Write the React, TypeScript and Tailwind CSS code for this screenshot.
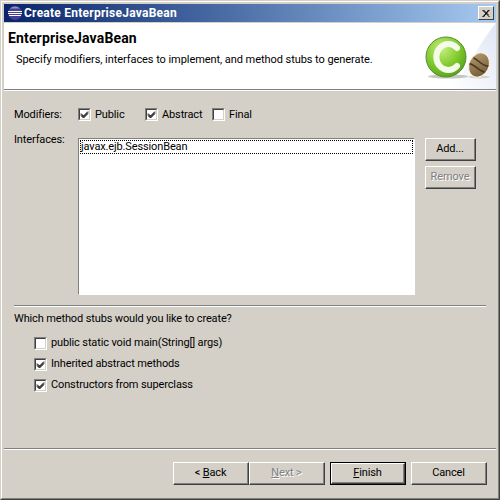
function Check({ on }: { on?: boolean }) {
  return (
    <span className="w-[13px] h-[13px] shrink-0 bg-white border border-t-[#808080] border-l-[#808080] border-r-white border-b-white">
      <span className="block w-[11px] h-[11px] border border-t-[#404040] border-l-[#404040] border-r-[#d4d0c8] border-b-[#d4d0c8]">
        {on && (
          <svg width="9" height="9" viewBox="0 0 9 9" className="block">
            <path d="M1 3.5 L3.5 6 L8 1.5 M1 4.5 L3.5 7 L8 2.5 M1 5.5 L3.5 8 L8 3.5" fill="none" stroke="#000" strokeWidth="1" />
          </svg>
        )}
      </span>
    </span>
  );
}

function Btn({ w, children, def }: { w: string; children: React.ReactNode; def?: boolean }) {
  return (
    <div className={`${w} h-[23px] ${def ? "border border-black" : ""}`}>
      <div className="h-full border border-t-white border-l-white border-r-[#404040] border-b-[#404040]">
        <div className="h-full flex items-center justify-center border-r border-b border-r-[#808080] border-b-[#808080]">
          {children}
        </div>
      </div>
    </div>
  );
}

function Logo() {
  return (
    <svg width="75" height="66" viewBox="0 0 75 66" className="block">
      <defs>
        <radialGradient id="g" cx="0.4" cy="0.3" r="0.8">
          <stop offset="0" stopColor="#c6ee7c" />
          <stop offset="0.55" stopColor="#7fc92c" />
          <stop offset="1" stopColor="#4c9a16" />
        </radialGradient>
        <linearGradient id="bg" x1="0" y1="1" x2="1" y2="0">
          <stop offset="0" stopColor="#ffffff" />
          <stop offset="1" stopColor="#dfe6f6" />
        </linearGradient>
        <linearGradient id="b" x1="0" y1="0" x2="1" y2="1">
          <stop offset="0" stopColor="#b9a078" />
          <stop offset="1" stopColor="#6a5230" />
        </linearGradient>
      </defs>
      <path d="M30 66 C45 50 58 20 75 0 L75 66 Z" fill="url(#bg)" />
      <ellipse cx="27" cy="53.5" rx="20" ry="2" fill="#c4c8c0" />
      <ellipse cx="58" cy="54" rx="11" ry="1.5" fill="#d4d4cc" />
      <circle cx="25" cy="34" r="20" fill="url(#g)" stroke="#5d8a3a" strokeWidth="1" />
      <path d="M36 25 A12 13 0 1 0 36 43" fill="none" stroke="#f4fbe8" strokeWidth="6" strokeLinecap="round" />
      <g transform="rotate(25 58 42)">
        <ellipse cx="58" cy="42" rx="10" ry="12.5" fill="url(#b)" stroke="#fff6d8" strokeWidth="1" />
        <path d="M50 38 C54 37 61 42 67 39 M49 45 C54 43 61 48 66 46" fill="none" stroke="#4a3618" strokeWidth="1.6" />
      </g>
    </svg>
  );
}

export default function App() {
  return (
    <div className="w-[500px] h-[500px] text-[11px] tracking-[-0.13px] text-black bg-[#d4d0c8] font-['Roboto',sans-serif] border border-t-[#d4d0c8] border-l-[#d4d0c8] border-r-[#404040] border-b-[#404040]">
      <div className="h-full flex flex-col p-[2px] border border-t-white border-l-white border-r-[#808080] border-b-[#808080]">
        {/* title bar */}
        <div className="h-[18px] shrink-0 flex items-center pl-[3px] pr-[2px] bg-gradient-to-r from-[#0a246a] to-[#a6caf0]">
          <svg width="16" height="16" viewBox="0 0 16 16" className="mr-[1px]">
            <circle cx="8" cy="8" r="7" fill="#47408f" />
            <path d="M1 6.5 H15 M1 8.5 H15 M2 10.5 H14" stroke="#fff" strokeWidth="1" />
            <path d="M3 3.5 A7 7 0 0 1 13 3.5 Z" fill="#8f8fd0" />
          </svg>
          <span className="flex-1 text-white font-bold text-[12px] tracking-[0.25px]">Create EnterpriseJavaBean</span>
          <div className="w-4 h-[14px] bg-[#d4d0c8] border border-t-white border-l-white border-r-[#404040] border-b-[#404040] flex items-center justify-center">
            <svg width="8" height="7" viewBox="0 0 8 7">
              <path d="M0.5 0 L7.5 7 M1.5 0 L6.5 5 M7.5 0 L0.5 7 M6.5 0 L1.5 7" stroke="#000" strokeWidth="1" />
            </svg>
          </div>
        </div>

        {/* header */}
        <div className="h-[66px] mt-px shrink-0 flex bg-white">
          <div className="flex-1 pl-[4px]">
            <div className="font-bold text-[14px] tracking-[0.15px] mt-[8px] leading-[14px]">EnterpriseJavaBean</div>
            <div className="mt-[8px] leading-[14px] ml-[8px] tracking-[-0.06px]">Specify modifiers, interfaces to implement, and method stubs to generate.</div>
          </div>
          <Logo />
        </div>
        <div className="h-px shrink-0 bg-[#808080]" />
        <div className="h-px shrink-0 bg-white" />

        {/* body */}
        <div className="flex-1 flex flex-col px-[10px]">
          <div className="flex items-center h-[13px] mt-[17px] leading-[15px]">
            <span className="w-[64px]">Modifiers:</span>
            <Check on />
            <span className="ml-[4px] w-[50px]">Public</span>
            <Check on />
            <span className="ml-[4px] w-[50px]">Abstract</span>
            <Check />
            <span className="ml-[4px]">Final</span>
          </div>

          <div className="flex mt-[17px] h-[157px]">
            <span className="w-[64px] leading-[14px] -mt-[5px]">Interfaces:</span>
            <div className="w-[337px] h-full bg-white px-px pt-[2px] border border-t-[#808080] border-l-[#808080] border-r-white border-b-white">
              <div className="h-[14px] leading-[12px] border border-dotted border-black -mt-px">javax.ejb.SessionBean</div>
            </div>
            <div className="ml-[10px] w-[51px] flex flex-col gap-[5px]">
              <Btn w="w-[51px]">Add...</Btn>
              <Btn w="w-[51px]"><span className="text-[#808080] [text-shadow:1px_1px_0_#fff]">Remove</span></Btn>
            </div>
          </div>

          <div className="h-px bg-[#808080] mt-[10px] shrink-0" />
          <div className="h-px bg-white shrink-0" />

          <div className="mt-[5px] leading-[14px]">Which method stubs would you like to create?</div>

          <div className="flex flex-col gap-[8px] mt-[11px] pl-[20px]">
            <div className="flex items-center gap-[4px] h-[13px]"><Check /><span>public static void main(String[] args)</span></div>
            <div className="flex items-center gap-[4px] h-[13px]"><Check on /><span>Inherited abstract methods</span></div>
            <div className="flex items-center gap-[4px] h-[13px]"><Check on /><span>Constructors from superclass</span></div>
          </div>
        </div>

        {/* footer */}
        <div className="h-px shrink-0 bg-[#808080]" />
        <div className="h-px shrink-0 bg-white" />
        <div className="h-[46px] shrink-0 flex items-start pt-[12px] pl-[169px]">
          <Btn w="w-[76px]"><span>&lt; <u>B</u>ack</span></Btn>
          <Btn w="w-[76px]"><span className="text-[#808080] [text-shadow:1px_1px_0_#fff]"><u>N</u>ext &gt;</span></Btn>
          <div className="ml-[5px]"><Btn def w="w-[76px]"><span><u>F</u>inish</span></Btn></div>
          <div className="ml-[5px]"><Btn w="w-[76px]">Cancel</Btn></div>
        </div>
      </div>
    </div>
  );
}
